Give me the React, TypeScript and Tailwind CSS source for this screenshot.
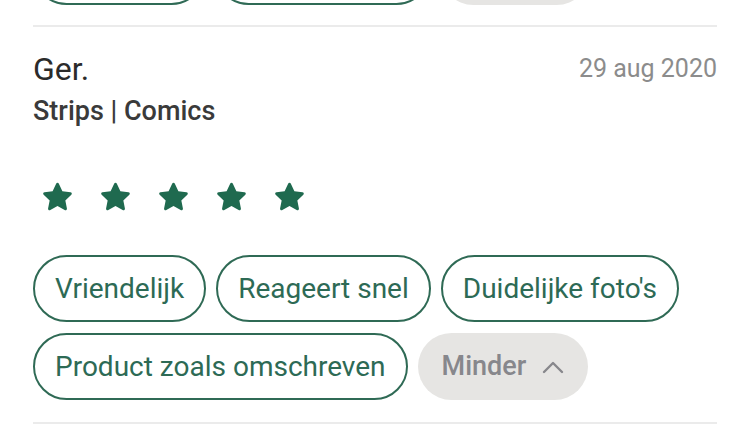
import React from 'react';

const font = { fontFamily: 'Roboto, "Noto Sans", sans-serif' };

const Star: React.FC = () => (
  <svg width="33" height="32" viewBox="0 0 24 23" className="text-[#1f6a4f]">
    <path
      d="M12 1.2c.45 0 .8.25 1 .7l2.55 5.45 5.9.7c.95.12 1.3 1.25.6 1.9l-4.35 4.05 1.15 5.850c.18.95-.82 1.65-1.65 1.18L12 18.1l-5.2 2.93c-.83.47-1.830-.23-1.65-1.18l1.15-5.85L1.95 9.95c-.7-.65-.35-1.78.6-1.9l5.9-.7L11 1.9c.2-.45.55-.7 1-.7z"
      fill="currentColor"
    />
  </svg>
);

const Chip: React.FC<{ label: string }> = ({ label }) => (
  <div className="h-[67px] px-[20px] flex items-center rounded-full border-2 border-[#2f6a55] text-[#2d6a55] text-[28px] whitespace-nowrap">
    {label}
  </div>
);

const Minder: React.FC = () => (
  <div className="h-[67px] pl-6 pr-6 flex items-center gap-4 rounded-full bg-[#e6e5e3] text-[#87878c] text-[27px] font-medium whitespace-nowrap">
    Minder
    <svg width="22" height="14" viewBox="0 0 22 14" fill="none">
      <path d="M2 12L11 3l9 9" stroke="#87878c" strokeWidth="2.4" strokeLinecap="round" strokeLinejoin="round" />
    </svg>
  </div>
);

export default function App() {
  return (
    <div className="w-[750px] h-[446px] bg-white overflow-hidden" style={font}>
      <div className="px-[33px]">
        {/* previous review, cut off at the top */}
        <div className="h-[5px] overflow-hidden flex items-end gap-[10px]">
          <div className="shrink-0 w-[172px] h-[67px] rounded-full border-2 border-[#2f6a55]" />
          <div className="shrink-0 w-[215px] h-[67px] rounded-full border-2 border-[#2f6a55]" />
          <div className="shrink-0 w-[150px] h-[67px] rounded-full bg-[#e6e5e3]" />
        </div>
        <div className="mt-[20px] h-[2px] bg-[#ebebeb]" />

        <div className="mt-[25px] flex items-start justify-between">
          <span className="text-[32px] leading-[34px] text-[#2b2b2b]">Ger.</span>
          <span className="text-[25px] leading-[34px] text-[#8c8c8c]">29 aug 2020</span>
        </div>
        <div className="mt-[10px] text-[27px] leading-[30px] font-medium text-[#3a3a3a]">Strips | Comics</div>

        <div className="mt-[55px] pl-[8px] flex gap-[25px]">
          <Star />
          <Star />
          <Star />
          <Star />
          <Star />
        </div>

        <div className="mt-[42px] flex flex-wrap gap-x-[10px] gap-y-[11px]">
          <Chip label="Vriendelijk" />
          <Chip label="Reageert snel" />
          <Chip label="Duidelijke foto's" />
          <Chip label="Product zoals omschreven" />
          <Minder />
        </div>

        <div className="mt-[22px] h-[2px] bg-[#ebebeb]" />
      </div>
    </div>
  );
}
